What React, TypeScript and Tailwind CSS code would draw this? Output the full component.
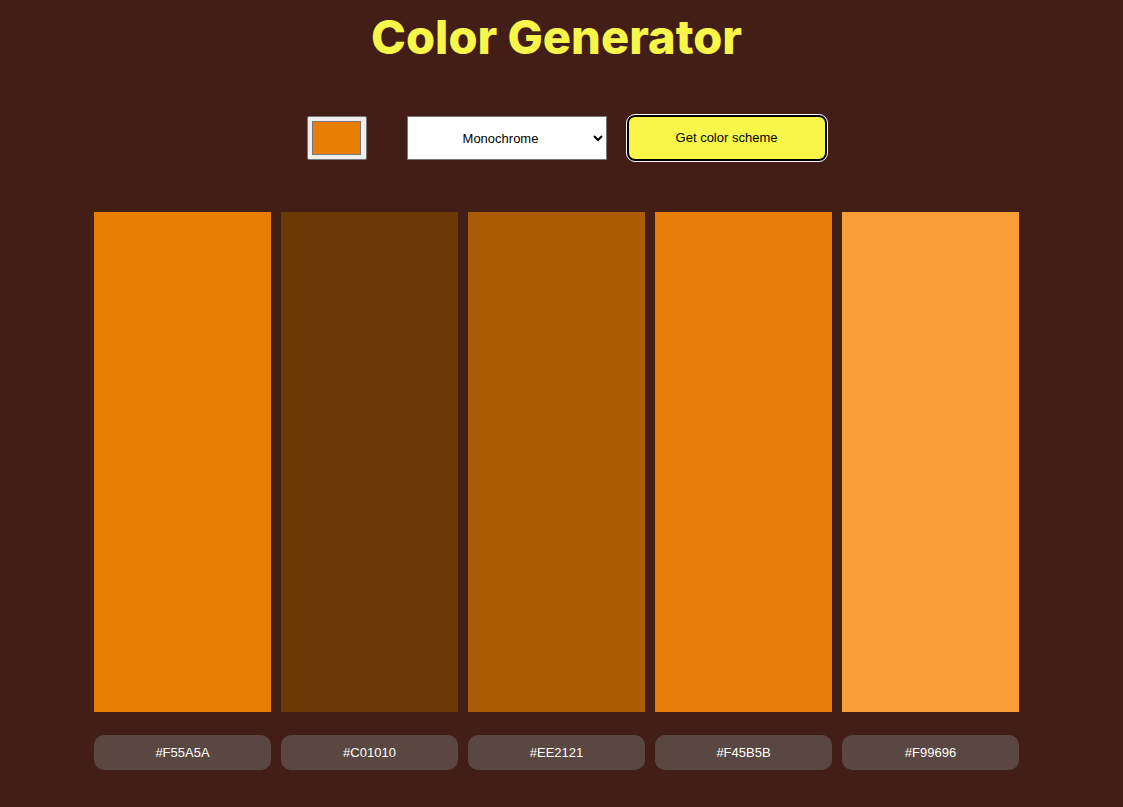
const colors = [
  { hex: "#F55A5A", swatch: "#e97e05" },
  { hex: "#C01010", swatch: "#6b3903" },
  { hex: "#EE2121", swatch: "#aa5c05" },
  { hex: "#F45B5B", swatch: "#e87e08" },
  { hex: "#F99696", swatch: "#f99d37" },
]

export default function App() {
  return (
    <div className="min-h-[807px] bg-[#421e16] pr-[10px] font-['Liberation_Sans',Arial,sans-serif]">
      <h1 className="pt-[10px] text-center font-['Inter',sans-serif] text-[47px] leading-[54px] font-extrabold tracking-[0px] text-[#f9f64a]">
        Color Generator
      </h1>
      <div className="mt-[51px] flex items-center justify-center pl-[20px]">
        <div className="flex h-[44px] w-[60px] items-center justify-center rounded-[2px] border border-[#767676] bg-[#efefef]">
          <div className="h-[34px] w-[49px] border border-[#777] bg-[#e97e05]" />
        </div>
        <select
          defaultValue="monochrome"
          className="ml-[40px] h-[44px] w-[200px] border border-[#767676] bg-white text-center text-[13px] text-black"
        >
          <option value="monochrome">Monochrome</option>
          <option value="dark">Monochrome-dark</option>
          <option value="light">Monochrome-light</option>
          <option value="complement">Complement</option>
        </select>
        <button className="ml-[20px] h-[46px] w-[200px] rounded-[8px] border-2 border-black bg-[#f9f64a] text-[13px] text-black outline outline-1 outline-white">
          Get color scheme
        </button>
      </div>
      <div className="mt-[51px] flex justify-center gap-[10px]">
        {colors.map((c) => (
          <div key={c.hex} className="flex w-[177px] flex-col">
            <div className="h-[500px]" style={{ backgroundColor: c.swatch }} />
            <div className="mt-[23px] flex h-[35px] items-center justify-center rounded-[10px] bg-[#5b4741] text-[13px] text-white">
              {c.hex}
            </div>
          </div>
        ))}
      </div>
    </div>
  )
}
